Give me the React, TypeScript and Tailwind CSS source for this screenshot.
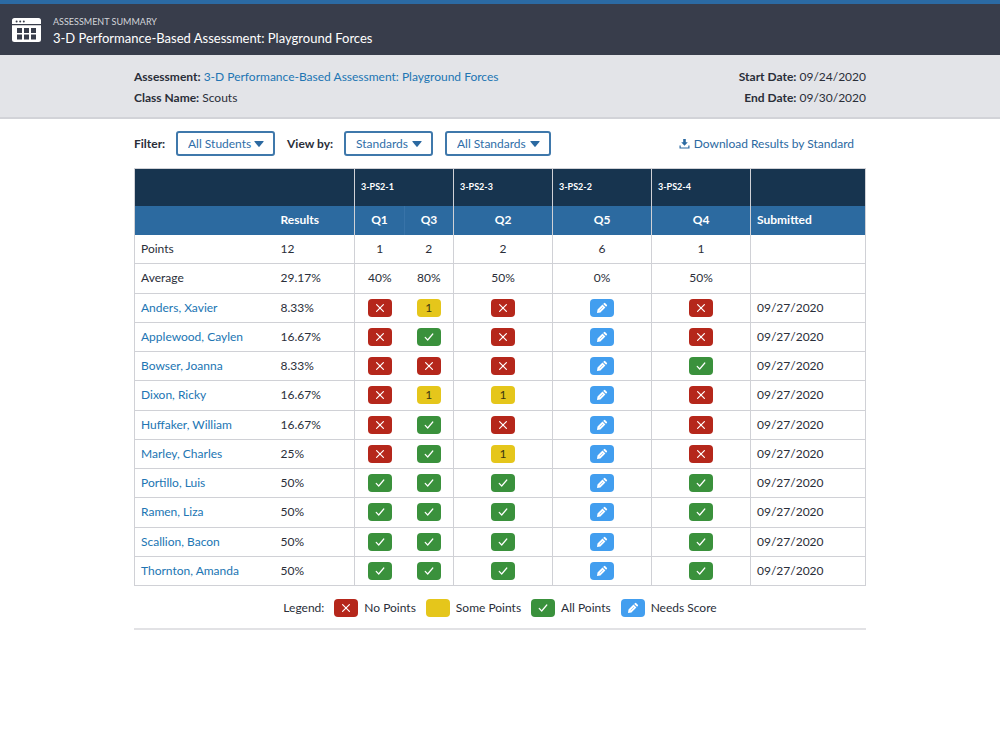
import React from 'react';
import clsx from 'clsx';

type Mark = 'none' | 'some' | 'all' | 'needs';

interface Question {
  id: string;
  points: number;
  average: string;
  divider: boolean;
}

interface Student {
  name: string;
  result: string;
  marks: Mark[];
}

const questions: Question[] = [
  { id: 'Q1', points: 1, average: '40%', divider: false },
  { id: 'Q3', points: 2, average: '80%', divider: true },
  { id: 'Q2', points: 2, average: '50%', divider: true },
  { id: 'Q5', points: 6, average: '0%', divider: true },
  { id: 'Q4', points: 1, average: '50%', divider: true },
];

const students: Student[] = [
  { name: 'Anders, Xavier', result: '8.33%', marks: ['none', 'some', 'none', 'needs', 'none'] },
  { name: 'Applewood, Caylen', result: '16.67%', marks: ['none', 'all', 'none', 'needs', 'none'] },
  { name: 'Bowser, Joanna', result: '8.33%', marks: ['none', 'none', 'none', 'needs', 'all'] },
  { name: 'Dixon, Ricky', result: '16.67%', marks: ['none', 'some', 'some', 'needs', 'none'] },
  { name: 'Huffaker, William', result: '16.67%', marks: ['none', 'all', 'none', 'needs', 'none'] },
  { name: 'Marley, Charles', result: '25%', marks: ['none', 'all', 'some', 'needs', 'none'] },
  { name: 'Portillo, Luis', result: '50%', marks: ['all', 'all', 'all', 'needs', 'all'] },
  { name: 'Ramen, Liza', result: '50%', marks: ['all', 'all', 'all', 'needs', 'all'] },
  { name: 'Scallion, Bacon', result: '50%', marks: ['all', 'all', 'all', 'needs', 'all'] },
  { name: 'Thornton, Amanda', result: '50%', marks: ['all', 'all', 'all', 'needs', 'all'] },
];

const markColors: Record<Mark, string> = {
  none: 'bg-[#b5271b]',
  some: 'bg-[#e5c61b]',
  all: 'bg-[#3a913c]',
  needs: 'bg-[#429eef]',
};

function SummaryIcon() {
  return (
    <svg viewBox="0 0 29 24" className="w-[29px] h-6 shrink-0" fill="#fff" aria-hidden="true">
      <path d="M2.5 0h24A2.5 2.5 0 0 1 29 2.5V6H0V2.5A2.5 2.5 0 0 1 2.5 0zM0 7.3h29v14.2a2.5 2.5 0 0 1-2.5 2.5h-24A2.5 2.5 0 0 1 0 21.5z" />
      <g fill="#383d4b">
        <circle cx="4.6" cy="3.5" r="1" />
        <circle cx="8.2" cy="3.5" r="1" />
        <circle cx="11.8" cy="3.5" r="1" />
        <path d="M5 10h5v5H5zM12 10h5v5h-5zM19 10h5v5h-5zM5 16.500h5v5H5zM12 16.500h5v5h-5zM19 16.500h5v5h-5z" />
      </g>
    </svg>
  );
}

function MarkIcon({ mark }: { mark: Mark }) {
  if (mark === 'none') {
    return (
      <svg viewBox="0 0 12 12" className="size-3" fill="none" stroke="#fff" strokeWidth="1.2" strokeLinecap="round">
        <path d="M2.6 2.6l6.8 6.8M9.4 2.6L2.6 9.4" />
      </svg>
    );
  }
  if (mark === 'all') {
    return (
      <svg viewBox="0 0 12 12" className="size-3" fill="none" stroke="#fff" strokeWidth="1.2" strokeLinecap="round" strokeLinejoin="round">
        <path d="M2.2 6.4l2.5 2.6L9.8 3" />
      </svg>
    );
  }
  if (mark === 'needs') {
    return (
      <svg viewBox="0 0 12 12" className="size-3" fill="#fff">
        <path d="M1 11l.5-3.4L6.5 2.6l2.900 2.900-5 5zM7.200 1.900l.7-.7a1 1 0 0 1 1.400 0l1.500 1.500a1 1 0 0 1 0 1.400l-.7.7z" />
        <path d="M3.700 8.400l3.300-3.300" stroke="#429eef" strokeWidth=".5" />
      </svg>
    );
  }
  return null;
}

function Badge({ mark, children }: { mark: Mark; children?: React.ReactNode }) {
  return (
    <span
      className={clsx(
        'inline-flex items-center justify-center w-6 h-[18px] rounded align-middle text-xs text-[#3a3512]',
        markColors[mark]
      )}
    >
      {children}
      <MarkIcon mark={mark} />
    </span>
  );
}

interface DropdownProps {
  label: string;
  options: string[];
  width: string;
}

function Dropdown({ label, options, width }: DropdownProps) {
  return (
    <span className={clsx('relative flex items-center', width)}>
      <select
        aria-label={label}
        className="w-full h-[25px] pl-2.5 pr-5 appearance-none rounded-[3px] border-2 border-[#3f78ab] bg-white text-xs text-[#2f6ea8] cursor-pointer"
      >
        {options.map((option) => (
          <option key={option}>{option}</option>
        ))}
      </select>
      <svg viewBox="0 0 10 6" className="absolute right-[11px] w-2.5 h-1.5 pointer-events-none" fill="#2b69a1">
        <path d="M.8 0h8.4q.8 0 .3.7L5.6 5.6q-.6.7-1.2 0L.5.7Q0 0 .8 0z" />
      </svg>
    </span>
  );
}

export default function App() {
  return (
    <div className="min-h-screen bg-white font-['Lato',sans-serif] text-xs text-[#2a2e39]">
      {/* Header */}
      <header className="flex items-center gap-3 h-[55px] px-3 border-t-4 border-[#2b6aa3] bg-[#383d4b] text-white">
        <SummaryIcon />
        <div className="pt-1">
          <p className="text-[9px] leading-3 text-[#d3d5da] uppercase">Assessment Summary</p>
          <h1 className="text-[13px] leading-5">3-D Performance-Based Assessment: Playground Forces</h1>
        </div>
      </header>

      {/* Assessment details */}
      <section className="h-16 px-4 border-b-2 border-[#d2d3d8] bg-[#e3e4e8]">
        <div className="max-w-[732px] mx-auto flex justify-between pt-[11px] leading-[21px]">
          <div>
            <p>
              <strong>Assessment:</strong>{' '}
              <a href="#assessment" className="text-[#2175b3]">3-D Performance-Based Assessment: Playground Forces</a>
            </p>
            <p><strong>Class Name:</strong> Scouts</p>
          </div>
          <div className="text-right">
            <p><strong>Start Date:</strong> 09/24/2020</p>
            <p><strong>End Date:</strong> 09/30/2020</p>
          </div>
        </div>
      </section>

      <main className="max-w-[732px] mx-auto">
        {/* Filters */}
        <div className="flex items-center h-[49px]">
          <strong className="w-[42px]">Filter:</strong>
          <Dropdown label="Filter" options={['All Students']} width="w-[99px]" />
          <strong className="w-[57px] ml-3">View by:</strong>
          <Dropdown label="View by" options={['Standards']} width="w-[89px]" />
          <span className="w-3" />
          <Dropdown label="Standards" options={['All Standards']} width="w-[106px]" />
          <a href="#download" className="flex items-center gap-1 ml-auto pr-3 text-[#2b69a1]">
            <svg viewBox="0 0 11 10" className="w-[11px] h-2.5" fill="#2b69a1">
              <path d="M4.2 0h2.600v3.300h2L5.500 6.800 2.200 3.300h2zM.5 6.500h1.200v1.900h7.600V6.500h1.200v3.100H.5z" />
            </svg>
            Download Results by Standard
          </a>
        </div>

        {/* Results */}
        <table className="w-full h-[418px] table-fixed border-collapse border border-[#d0d1d6]">
          <colgroup>
            <col className="w-[140px]" />
            <col className="w-20" />
            <col className="w-[50px]" />
            <col className="w-[49px]" />
            <col className="w-[99px]" />
            <col className="w-[99px]" />
            <col className="w-[99px]" />
            <col />
          </colgroup>
          <thead className="text-white">
            <tr className="h-[37px] bg-[#17344f] text-[9px] text-left">
              <td colSpan={2} className="border-r border-[#d0d1d6]" />
              <th colSpan={2} className="px-1.5 border-r border-[#d0d1d6]">3-PS2-1</th>
              <th className="px-1.5 border-r border-[#d0d1d6]">3-PS2-3</th>
              <th className="px-1.5 border-r border-[#d0d1d6]">3-PS2-2</th>
              <th className="px-1.5 border-r border-[#d0d1d6]">3-PS2-4</th>
              <td />
            </tr>
            <tr className="h-[29px] bg-[#2c6aa0]">
              <td />
              <th className="px-1.5 text-left border-r border-[#d0d1d6]">Results</th>
              {questions.map((q) => (
                <th key={q.id} className={clsx('border-r', q.divider ? 'border-[#d0d1d6]' : 'border-[#3873a8]')}>
                  {q.id}
                </th>
              ))}
              <th className="px-1.5 text-left">Submitted</th>
            </tr>
          </thead>
          <tbody>
            <tr className="h-[29px] border-b border-[#d0d1d6]">
              <td className="px-1.5">Points</td>
              <td className="px-1.5 border-r border-[#d0d1d6]">12</td>
              {questions.map((q) => (
                <td key={q.id} className={clsx('text-center', q.divider && 'border-r border-[#d0d1d6]')}>{q.points}</td>
              ))}
              <td />
            </tr>
            <tr className="h-[29px] border-b border-[#d0d1d6]">
              <td className="px-1.5">Average</td>
              <td className="px-1.5 border-r border-[#d0d1d6]">29.17%</td>
              {questions.map((q) => (
                <td key={q.id} className={clsx('text-center', q.divider && 'border-r border-[#d0d1d6]')}>{q.average}</td>
              ))}
              <td />
            </tr>
            {students.map((student) => (
              <tr key={student.name} className="h-[29px] border-b border-[#d0d1d6]">
                <td className="px-1.5">
                  <a href="#student" className="text-[#2175b3]">{student.name}</a>
                </td>
                <td className="px-1.5 border-r border-[#d0d1d6]">{student.result}</td>
                {student.marks.map((mark, i) => (
                  <td
                    key={questions[i].id}
                    className={clsx('text-center', questions[i].divider && 'border-r border-[#d0d1d6]')}
                  >
                    <Badge mark={mark}>{mark === 'some' && '1'}</Badge>
                  </td>
                ))}
                <td className="px-1.5">09/27/2020</td>
              </tr>
            ))}
          </tbody>
        </table>

        {/* Legend */}
        <div className="flex items-center justify-center gap-2.5 h-11 pt-0.5 border-b-2 border-[#e2e2e5]">
          <span>Legend:</span>
          <span className="flex items-center gap-1.5"><Badge mark="none" />No Points</span>
          <span className="flex items-center gap-1.5"><Badge mark="some" />Some Points</span>
          <span className="flex items-center gap-1.5"><Badge mark="all" />All Points</span>
          <span className="flex items-center gap-1.5"><Badge mark="needs" />Needs Score</span>
        </div>
      </main>
    </div>
  );
}
